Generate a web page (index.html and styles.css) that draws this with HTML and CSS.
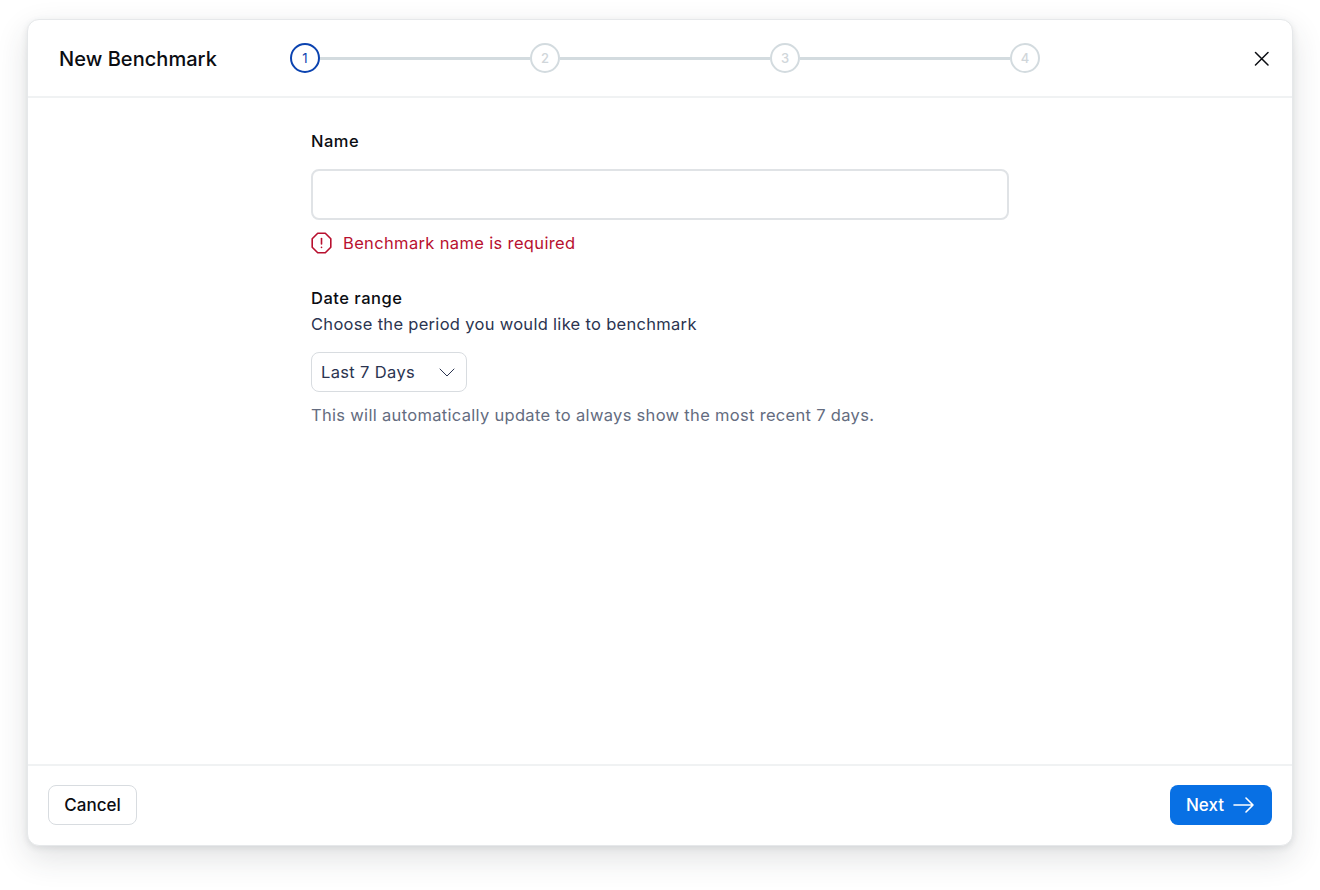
FILE: index.html
```html
<!DOCTYPE html>
<html lang="en">
<head>
<meta charset="utf-8">
<title>New Benchmark</title>
<link rel="stylesheet" href="styles.css">
</head>
<body>
<div class="modal">
  <header class="header">
    <h1 class="title">New Benchmark</h1>
    <ol class="stepper">
      <li class="step step-active">1</li>
      <li class="line"></li>
      <li class="step">2</li>
      <li class="line"></li>
      <li class="step">3</li>
      <li class="line"></li>
      <li class="step">4</li>
    </ol>
    <button class="close" aria-label="Close">
      <svg width="16" height="16" viewBox="0 0 16 16" fill="none" stroke="#0b0d12" stroke-width="1.5" stroke-linecap="round"><path d="M1.500 2.500l12.500 12.500M14 2.500l-12.500 12.500"/></svg>
    </button>
  </header>
  <main class="body">
    <form class="form">
      <label class="label">Name</label>
      <div class="input"></div>
      <div class="error">
        <svg class="error-icon" width="21" height="22" viewBox="0 0 21 22" fill="none" stroke="#b8102f" stroke-width="1.6" stroke-linecap="round" stroke-linejoin="round"><path d="M6.700 1.300h7.600L19.800 6.800v8.400L14.300 20.700H6.700L1.200 15.200V6.800z"/><path d="M10.500 6.500v5.500"/><path d="M10.500 15.300v.2"/></svg>
        <span>Benchmark name is required</span>
      </div>
      <label class="label label-range">Date range</label>
      <p class="desc">Choose the period you would like to benchmark</p>
      <div class="select">
        <span>Last 7 Days</span>
        <svg width="16" height="9" viewBox="0 0 16 9" fill="none" stroke="#2b3450" stroke-width="1" stroke-linecap="round" stroke-linejoin="round"><path d="M1 1l7 7 7-7"/></svg>
      </div>
      <p class="hint">This will automatically update to always show the most recent 7 days.</p>
    </form>
  </main>
  <footer class="footer">
    <button class="btn btn-cancel">Cancel</button>
    <button class="btn btn-next">Next
      <svg width="21" height="16" viewBox="0 0 21 16" fill="none" stroke="#fff" stroke-width="1.6" stroke-linecap="round" stroke-linejoin="round"><path d="M1 8h19M13 1l7 7-7 7"/></svg>
    </button>
  </footer>
</div>
</body>
</html>
```
FILE: styles.css
```css
* { box-sizing: border-box; }
html, body { margin: 0; height: 100%; }
body {
  background: #fff;
  font-family: Inter, "Liberation Sans", sans-serif;
  padding: 19px 27px 44px 27px;
  color: #0b0d12;
}
.modal {
  height: 827px;
  background: #fff;
  border: 1px solid #e6e8ea;
  border-radius: 12px;
  box-shadow: 0 12px 32px rgba(40, 50, 60, 0.14), 0 2px 6px rgba(40, 50, 60, 0.1);
  display: flex;
  flex-direction: column;
}
.header {
  height: 78px;
  flex: none;
  border-bottom: 2px solid #f0f2f3;
  display: flex;
  align-items: center;
  padding: 0 22px 0 31px;
}
.title {
  margin: 0;
  width: 231px;
  padding-top: 2px;
  font-size: 20px;
  font-weight: 500;
  line-height: 24px;
  letter-spacing: 0.05px;
  flex: none;
}
.stepper {
  list-style: none;
  margin: 0;
  padding: 0;
  display: flex;
  align-items: center;
  width: 750px;
  flex: none;
}
.step {
  width: 30px;
  height: 30px;
  flex: none;
  border: 2px solid #d3dbdf;
  border-radius: 50%;
  display: flex;
  align-items: center;
  justify-content: center;
  font-size: 13px;
  line-height: 16px;
  color: #d0d6da;
  font-weight: 500;
}
.step-active {
  border-color: #0b43b0;
  color: #0b43b0;
  font-weight: 400;
}
.line {
  flex: 1;
  height: 3px;
  background: #d3dbdf;
}
.close {
  margin-left: auto;
  width: 16px;
  height: 16px;
  padding: 0;
  border: 0;
  background: none;
  display: flex;
}
.body {
  flex: 1;
  display: flex;
  justify-content: center;
  padding-top: 32px;
}
.form {
  width: 698px;
}
.label {
  display: block;
  font-size: 16.500px;
  line-height: 22px;
  font-weight: 450;
  letter-spacing: 0.5px;
  color: #0b0d12;
}
.input {
  margin-top: 17px;
  height: 51px;
  border: 2px solid #e0e3e6;
  border-radius: 8px;
  background: #fff;
}
.error {
  margin-top: 12px;
  display: flex;
  align-items: center;
  gap: 11px;
  font-size: 16.500px;
  line-height: 22px;
  letter-spacing: 0.35px;
  color: #b8102f;
}
.error-icon { flex: none; }
.label-range { margin-top: 33px; }
.desc {
  margin: 4px 0 0;
  font-size: 16.500px;
  line-height: 22px;
  letter-spacing: 0.3px;
  color: #2b3450;
}
.select {
  margin-top: 17px;
  width: 156px;
  height: 40px;
  border: 1.500px solid #d8dce0;
  border-radius: 8px;
  display: flex;
  align-items: center;
  justify-content: space-between;
  padding: 0 11px 0 9px;
  font-size: 16.500px;
  letter-spacing: 0.35px;
  color: #2b3450;
}
.hint {
  margin: 12px 0 0;
  font-size: 16.500px;
  line-height: 22px;
  letter-spacing: 0.31px;
  color: #646c80;
}
.footer {
  height: 81px;
  flex: none;
  border-top: 2px solid #f0f2f3;
  display: flex;
  align-items: center;
  justify-content: space-between;
  padding: 0 20px 1px;
}
.btn {
  height: 40px;
  border-radius: 8px;
  font-family: inherit;
  font-size: 17px;
  font-weight: 450;
  display: flex;
  align-items: center;
}
.btn-cancel {
  width: 89px;
  justify-content: center;
  padding: 0;
  background: #fff;
  border: 1.500px solid #d8dce0;
  color: #0b0d12;
}
.btn-next {
  width: 102px;
  padding: 0 0 0 16px;
  gap: 9px;
  background: #0870e4;
  border: 0;
  color: #fff;
}
```
